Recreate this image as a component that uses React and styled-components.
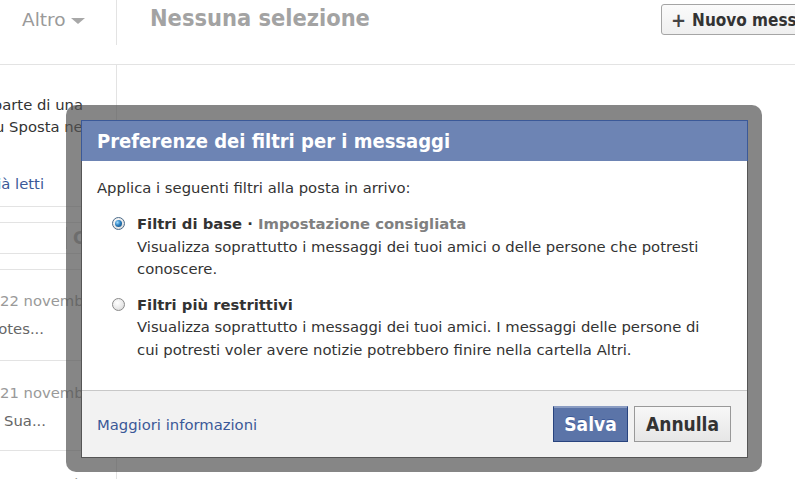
import React from "react";
import styled, { createGlobalStyle, css } from "styled-components";

const Global = createGlobalStyle`
  html, body { margin: 0; padding: 0; background: #fff; }
  body { width: 795px; height: 479px; overflow: hidden; font-family: "DejaVu Sans", "Liberation Sans", sans-serif; }
  * { box-sizing: border-box; }
`;

const condensed = css`
  font-family: "DejaVu Sans Condensed", "DejaVu Sans", sans-serif;
  font-stretch: condensed;
`;

const Page = styled.div`
  position: relative;
  width: 795px;
  height: 479px;
  overflow: hidden;
  display: grid;
  grid-template-rows: 65px 1fr;
`;

const TopBar = styled.div`
  display: grid;
  grid-template-columns: 117px 544px 200px;
  border-bottom: 1px solid #e3e3e3;
`;

const TabCell = styled.div`
  height: 45px;
  border-right: 1px solid #e3e3e3;
  display: flex;
  align-items: center;
  gap: 5px;
  color: #9a9a9a;
  font-size: 18.5px;
  padding-bottom: 6px;
  padding-left: 22px;
`;

const Caret = styled.span`
  width: 0;
  height: 0;
  border-left: 7px solid transparent;
  border-right: 7px solid transparent;
  border-top: 6px solid #a8a8a8;
  margin-top: 2px;
`;

const Heading = styled.div`
  ${condensed};
  padding-left: 33px;
  padding-top: 4px;
  font-size: 23.4px;
  font-weight: bold;
  color: #a3a3a3;
`;

const NewButton = styled.div`
  ${condensed};
  margin-top: 4px;
  height: 31px;
  width: 200px;
  border: 1px solid #a5a5a5;
  border-radius: 3px;
  background: linear-gradient(#fbfbfb, #efefef);
  display: flex;
  align-items: center;
  padding-left: 9px;
  gap: 6px;
  font-size: 17px;
  font-weight: bold;
  color: #333;
  white-space: nowrap;
`;

const Plus = styled.span`
  font-size: 20px;
  color: #444;
`;

const Body = styled.div`
  display: grid;
  grid-template-columns: 117px 1fr;
`;

const LeftCol = styled.div`
  border-right: 1px solid #e3e3e3;
  overflow: hidden;
  display: flex;
  flex-direction: column;
`;

const Row = styled.div`
  height: ${(p) => p.$h}px;
  flex-shrink: 0;
  border-bottom: ${(p) => (p.$noLine ? "none" : "1px solid #e3e3e3")};
  padding-top: ${(p) => p.$pt || 0}px;
  white-space: nowrap;
  font-size: 14.8px;
  line-height: 22px;
  color: ${(p) => p.$color || "#333"};
`;

/* a line of the clipped list: its text ends at $end px, overflowing to the left */
const Line = styled.div`
  display: flex;
  justify-content: ${(p) => (p.$end ? "flex-end" : "flex-start")};
  width: ${(p) => (p.$end ? `${p.$end}px` : "auto")};
  padding-left: ${(p) => p.$start || 0}px;
  color: ${(p) => p.$color || "inherit"};
  margin-top: ${(p) => p.$mt || 0}px;
  & > span { flex-shrink: 0; }
`;

const SearchEdge = styled.div`
  display: flex;
  align-items: center;
  height: 100%;
  padding-left: 66px;
  gap: 6px;
`;

const SearchDivider = styled.span`
  width: 1px;
  height: 22px;
  background: #d8d8d8;
`;

const SearchGlyph = styled.span`
  font-size: 17px;
  color: #aaa;
  font-weight: bold;
`;

const MainArea = styled.div``;

const Overlay = styled.div`
  position: absolute;
  left: 66px;
  top: 105px;
  width: 696px;
  height: 367px;
  padding: 15px 14px 14px 15px;
  border-radius: 10px;
  background: rgba(82, 82, 82, 0.7);
`;

const Dialog = styled.div`
  height: 100%;
  background: #fff;
  border: 1px solid #555;
  display: flex;
  flex-direction: column;
`;

const DialogHeader = styled.div`
  ${condensed};
  height: 41px;
  flex-shrink: 0;
  background: #6d84b4;
  color: #fff;
  font-size: 20px;
  font-weight: bold;
  display: flex;
  align-items: center;
  padding-left: 15px;
  margin: -1px -1px 0;
  border: 1px solid #3b5998;
  border-bottom: none;
`;

const DialogContent = styled.div`
  flex: 1;
  padding: 16px 30px 0 15px;
  font-size: 14.8px;
  line-height: 22.5px;
  color: #333;
`;

const Intro = styled.div`
  margin-bottom: 13.5px;
`;

const Option = styled.div`
  display: grid;
  grid-template-columns: 25px 1fr;
  padding-left: 15px;
  margin-bottom: 13px;
`;

const Radio = styled.span`
  width: 13px;
  height: 13px;
  margin-top: 4px;
  border-radius: 50%;
  border: 1px solid #8a8a8a;
  background: radial-gradient(circle at 40% 35%, #ffffff 0%, #e9e9e9 55%, #cfcfcf 100%);
  display: flex;
  align-items: center;
  justify-content: center;
  ${(p) =>
    p.$checked &&
    css`
      border-color: #4b6b8a;
      &::after {
        content: "";
        width: 7px;
        height: 7px;
        border-radius: 50%;
        background: radial-gradient(circle at 35% 35%, #9fdcff 0%, #2a7fc0 45%, #0f3f6b 100%);
      }
    `}
`;

const OptionTitle = styled.div`
  font-weight: bold;
  color: #333;
`;

const Hint = styled.span`
  color: #808080;
`;

const Footer = styled.div`
  height: 67px;
  flex-shrink: 0;
  background: #f2f2f2;
  border-top: 1px solid #c8c8c8;
  display: flex;
  align-items: center;
  justify-content: space-between;
  padding: 0 16px 0 15px;
`;

const Link = styled.a`
  color: #3b5998;
  font-size: 14.8px;
  text-decoration: none;
`;

const Buttons = styled.div`
  display: flex;
  gap: 6px;
`;

const Button = styled.button`
  ${condensed};
  height: 36px;
  padding: 0 10px;
  font-size: 19px;
  font-weight: bold;
  cursor: pointer;
  ${(p) =>
    p.$primary
      ? css`
          min-width: 75px;
          background: #5b74a8;
          border: 1px solid #29447e;
          border-top-color: #8a9cc2;
          box-shadow: inset 0 1px 0 #8a9cc2;
          color: #fff;
          text-shadow: 0 -1px 0 #3b5998;
        `
      : css`
          min-width: 97px;
          background: linear-gradient(#f7f7f7, #e6e6e6);
          border: 1px solid #999;
          color: #333;
        `}
`;

export default function App() {
  return (
    <>
      <Global />
      <Page>
        <TopBar>
          <TabCell>
            Altro <Caret />
          </TabCell>
          <Heading>Nessuna selezione</Heading>
          <NewButton>
            <Plus>+</Plus> Nuovo messaggio
          </NewButton>
        </TopBar>
        <Body>
          <LeftCol>
            <Row $h={142} $pt={29}>
              <Line $end={83}><span>Questo messaggio fa parte di una</span></Line>
              <Line $end={100}><span>conversazione, fai clic su Sposta nella</span></Line>
              <Line $end={44} $mt={35} $color="#3b5998"><span>Segna come già letti</span></Line>
            </Row>
            <Row $h={16} />
            <Row $h={31}>
              <SearchEdge>
                <SearchDivider />
                <SearchGlyph>C</SearchGlyph>
              </SearchEdge>
            </Row>
            <Row $h={16} />
            <Row $h={91} $pt={20} $color="#999">
              <Line $start={0}><span>22 novembre</span></Line>
              <Line $end={44} $mt={6} $color="#666"><span>Messaggio di Notes...</span></Line>
            </Row>
            <Row $h={90} $pt={21} $color="#999">
              <Line $start={0}><span>21 novembre</span></Line>
              <Line $end={46} $mt={6} $color="#666"><span>Risposta alla Sua...</span></Line>
            </Row>
            <Row $h={40} $pt={22} $noLine $color="#999">
              <Line $start={0}><span>20 novembre</span></Line>
            </Row>
          </LeftCol>
          <MainArea />
        </Body>
        <Overlay>
          <Dialog>
            <DialogHeader>Preferenze dei filtri per i messaggi</DialogHeader>
            <DialogContent>
              <Intro>Applica i seguenti filtri alla posta in arrivo:</Intro>
              <Option>
                <Radio $checked />
                <div>
                  <OptionTitle>
                    Filtri di base · <Hint>Impostazione consigliata</Hint>
                  </OptionTitle>
                  <div>
                    Visualizza soprattutto i messaggi dei tuoi amici o delle persone che potresti
                    conoscere.
                  </div>
                </div>
              </Option>
              <Option>
                <Radio />
                <div>
                  <OptionTitle>Filtri più restrittivi</OptionTitle>
                  <div>
                    Visualizza soprattutto i messaggi dei tuoi amici. I messaggi delle persone di
                    cui potresti voler avere notizie potrebbero finire nella cartella Altri.
                  </div>
                </div>
              </Option>
            </DialogContent>
            <Footer>
              <Link href="#">Maggiori informazioni</Link>
              <Buttons>
                <Button $primary>Salva</Button>
                <Button>Annulla</Button>
              </Buttons>
            </Footer>
          </Dialog>
        </Overlay>
      </Page>
    </>
  );
}
